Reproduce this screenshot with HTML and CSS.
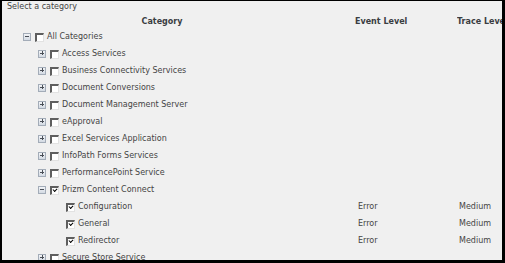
FILE: index.html
```html
<!DOCTYPE html>
<html>
<head>
<meta charset="utf-8">
<link rel="stylesheet" href="styles.css">
</head>
<body>
<div class="frame">
  <div class="title">Select a category</div>
  <div class="row head">
    <div class="cell cat-head">Category</div>
    <div class="cell">Event Level</div>
    <div class="cell">Trace Level</div>
  </div>

  <div class="row">
    <div class="cell tree l0"><span class="exp minus"></span><span class="chk"></span><span class="lbl">All Categories</span></div>
    <div class="cell"></div><div class="cell"></div>
  </div>
  <div class="row">
    <div class="cell tree l1"><span class="exp plus"></span><span class="chk"></span><span class="lbl">Access Services</span></div>
    <div class="cell"></div><div class="cell"></div>
  </div>
  <div class="row">
    <div class="cell tree l1"><span class="exp plus"></span><span class="chk"></span><span class="lbl">Business Connectivity Services</span></div>
    <div class="cell"></div><div class="cell"></div>
  </div>
  <div class="row">
    <div class="cell tree l1"><span class="exp plus"></span><span class="chk"></span><span class="lbl">Document Conversions</span></div>
    <div class="cell"></div><div class="cell"></div>
  </div>
  <div class="row">
    <div class="cell tree l1"><span class="exp plus"></span><span class="chk"></span><span class="lbl">Document Management Server</span></div>
    <div class="cell"></div><div class="cell"></div>
  </div>
  <div class="row">
    <div class="cell tree l1"><span class="exp plus"></span><span class="chk"></span><span class="lbl">eApproval</span></div>
    <div class="cell"></div><div class="cell"></div>
  </div>
  <div class="row">
    <div class="cell tree l1"><span class="exp plus"></span><span class="chk"></span><span class="lbl">Excel Services Application</span></div>
    <div class="cell"></div><div class="cell"></div>
  </div>
  <div class="row">
    <div class="cell tree l1"><span class="exp plus"></span><span class="chk"></span><span class="lbl">InfoPath Forms Services</span></div>
    <div class="cell"></div><div class="cell"></div>
  </div>
  <div class="row">
    <div class="cell tree l1"><span class="exp plus"></span><span class="chk"></span><span class="lbl">PerformancePoint Service</span></div>
    <div class="cell"></div><div class="cell"></div>
  </div>
  <div class="row">
    <div class="cell tree l1"><span class="exp minus"></span><span class="chk on"></span><span class="lbl">Prizm Content Connect</span></div>
    <div class="cell"></div><div class="cell"></div>
  </div>
  <div class="row">
    <div class="cell tree l2"><span class="exp none"></span><span class="chk on"></span><span class="lbl">Configuration</span></div>
    <div class="cell val ev">Error</div><div class="cell val tr">Medium</div>
  </div>
  <div class="row">
    <div class="cell tree l2"><span class="exp none"></span><span class="chk on"></span><span class="lbl">General</span></div>
    <div class="cell val ev">Error</div><div class="cell val tr">Medium</div>
  </div>
  <div class="row">
    <div class="cell tree l2"><span class="exp none"></span><span class="chk on"></span><span class="lbl">Redirector</span></div>
    <div class="cell val ev">Error</div><div class="cell val tr">Medium</div>
  </div>
  <div class="row">
    <div class="cell tree l1"><span class="exp plus"></span><span class="chk"></span><span class="lbl">Secure Store Service</span></div>
    <div class="cell"></div><div class="cell"></div>
  </div>
</div>
</body>
</html>
```

FILE: styles.css
```css
html, body {
  margin: 0;
  padding: 0;
  background: #ffffff;
}

.frame {
  box-sizing: border-box;
  width: 505px;
  height: 263px;
  overflow: hidden;
  background: #f0f0f0;
  border-style: solid;
  border-color: #000;
  border-width: 1px 3px 3px 2px;
  font-family: "DejaVu Sans", Verdana, sans-serif;
  font-size: 8px;
  color: #444444;
}

.title {
  height: 12px;
  line-height: 12px;
  padding-left: 5px;
  white-space: nowrap;
}

.row {
  display: grid;
  grid-template-columns: 353px 102px 1fr;
  height: 17px;
  line-height: 17px;
  white-space: nowrap;
}

.row.head {
  margin-top: 2px;
  height: 13px;
  line-height: 13px;
  font-weight: bold;
  color: #3a3d42;
}

.cat-head {
  text-align: center;
  padding-right: 33px;
}

.cell {
  overflow: hidden;
}

.tree {
  display: flex;
  align-items: center;
}

.l0 { padding-left: 21px; }
.l1 { padding-left: 36px; }
.l2 { padding-left: 36px; }
.l2 .exp { margin-left: 15px; }

.exp {
  flex: none;
  box-sizing: border-box;
  width: 8px;
  height: 8px;
  margin-right: 4px;
  border: 1px solid #a3acb8;
  background: linear-gradient(#f2f4f7, #d3dae3);
  position: relative;
}

.exp.none {
  border: none;
  background: none;
  width: 0;
  margin-right: 13px;
}

.exp::before {
  content: "";
  position: absolute;
  left: 1px;
  top: 2px;
  width: 4px;
  height: 1px;
  background: #4a4f57;
}

.exp.plus::after {
  content: "";
  position: absolute;
  left: 2.5px;
  top: 0.5px;
  width: 1px;
  height: 4px;
  background: #4a4f57;
}

.exp.none::before { display: none; }

.chk {
  flex: none;
  box-sizing: border-box;
  width: 9px;
  height: 9px;
  margin-right: 3px;
  margin-top: 1px;
  background: #fff;
  border-top: 2px solid #5e5e5e;
  border-left: 2px solid #5e5e5e;
  border-right: 1px solid #e2e2e2;
  border-bottom: 1px solid #e2e2e2;
  position: relative;
}

.chk.on::after {
  content: "";
  position: absolute;
  left: 1px;
  top: 0px;
  width: 3px;
  height: 2px;
  border-left: 1.5px solid #000;
  border-bottom: 1.5px solid #000;
  transform: rotate(-45deg);
}

.val.ev { padding-left: 3px; }
.val.tr { padding-left: 2px; }
```
